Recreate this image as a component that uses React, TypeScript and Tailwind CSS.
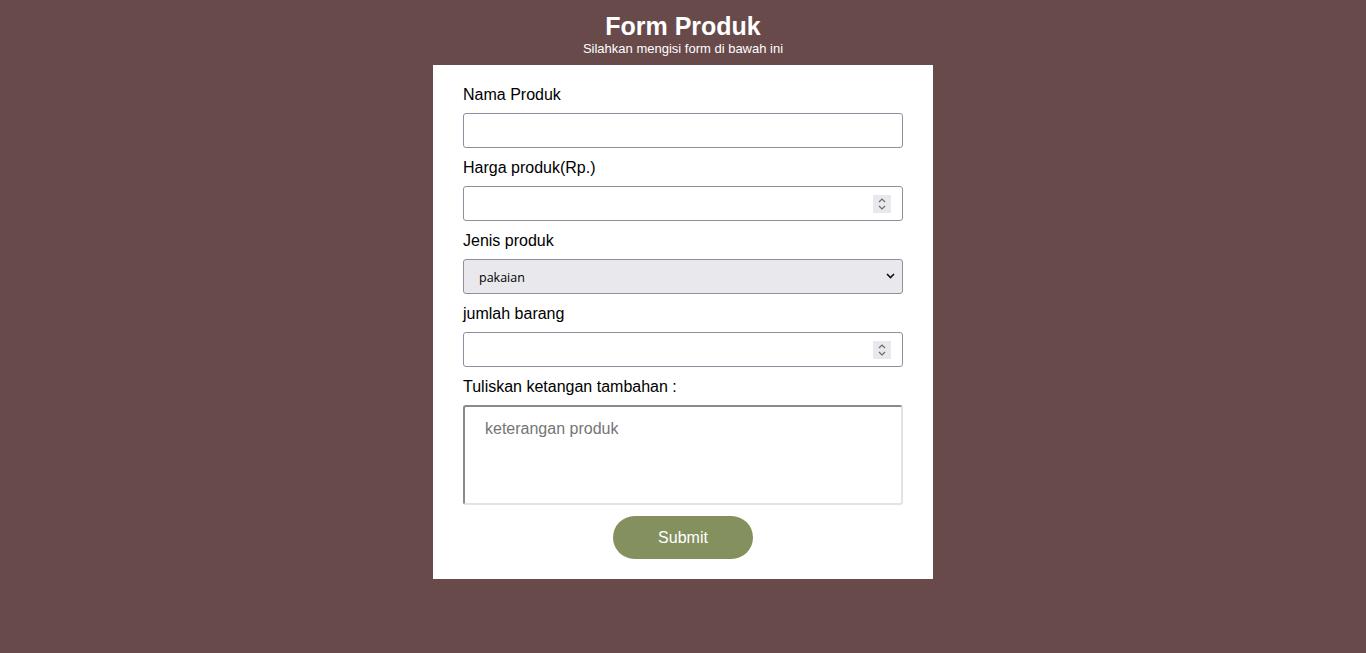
import { useState } from 'react'

const ARIAL = "font-['Liberation_Sans',Arial,sans-serif]"

function Spinner() {
  return (
    <div className="flex h-[18px] w-[18px] flex-col items-center justify-center bg-[#e9e9ed]">
      <svg width="8" height="14" viewBox="0 0 8 14" fill="none" stroke="#6b6b6b" strokeWidth="1.2">
        <path d="M1 5 L4 2 L7 5" />
        <path d="M1 9 L4 12 L7 9" />
      </svg>
    </div>
  )
}

function NumberField({ value, onChange }: { value: string; onChange: (v: string) => void }) {
  return (
    <div className="flex h-[35px] w-full items-center rounded-[3px] border border-[#8f8f9d] bg-white pr-[11px]">
      <input
        type="text"
        inputMode="numeric"
        value={value}
        onChange={(e) => onChange(e.target.value)}
        className={`h-full min-w-0 flex-1 bg-transparent px-3 text-[16px] outline-none ${ARIAL}`}
      />
      <Spinner />
    </div>
  )
}

export default function App() {
  const [nama, setNama] = useState('')
  const [harga, setHarga] = useState('')
  const [jenis, setJenis] = useState('pakaian')
  const [jumlah, setJumlah] = useState('')
  const [ket, setKet] = useState('')

  return (
    <div className={`min-h-[653px] w-full bg-[#684a4b] pt-[12px] ${ARIAL}`}>
      {/* judul */}
      <div className="text-center text-white">
        <h1 className="text-[25px] font-bold leading-[29px]">Form Produk</h1>
        <p className="text-[13px] leading-[15px]">Silahkan mengisi form di bawah ini</p>
      </div>

      {/* form */}
      <form
        onSubmit={(e) => e.preventDefault()}
        className="mx-auto mt-[9px] flex w-[500px] flex-col bg-white px-[30px] pb-[20px] pt-[19px] text-black"
      >
        <label className="pt-[1px] text-[16px] leading-[20px]">Nama Produk</label>
        <input
          type="text"
          value={nama}
          onChange={(e) => setNama(e.target.value)}
          className="mt-[8px] h-[35px] w-full rounded-[3px] border border-[#8f8f9d] px-3 text-[16px] outline-none"
        />

        <label className="mt-[9px] pt-[1px] text-[16px] leading-[20px]">Harga produk(Rp.)</label>
        <div className="mt-[8px]">
          <NumberField value={harga} onChange={setHarga} />
        </div>

        <label className="mt-[9px] pt-[1px] text-[16px] leading-[20px]">Jenis produk</label>
        <div className="relative mt-[8px] h-[35px] w-full">
          <select
            value={jenis}
            onChange={(e) => setJenis(e.target.value)}
            className="h-full w-full appearance-none rounded-[3px] border border-[#8f8f9d] bg-[#e9e9ed] pl-[15px] pt-[4px] font-['Open_Sans','Noto_Sans',sans-serif] text-[12.5px] text-black outline-none"
          >
            <option value="pakaian">pakaian</option>
            <option value="elektronik">elektronik</option>
            <option value="makanan">makanan</option>
          </select>
          <svg
            className="pointer-events-none absolute right-[8px] top-[14px]"
            width="9"
            height="6"
            viewBox="0 0 9 6"
            fill="none"
            stroke="#111"
            strokeWidth="1.6"
          >
            <path d="M1 1 L4.5 4.5 L8 1" />
          </svg>
        </div>

        <label className="mt-[9px] pt-[1px] text-[16px] leading-[20px]">jumlah barang</label>
        <div className="mt-[8px]">
          <NumberField value={jumlah} onChange={setJumlah} />
        </div>

        <label className="mt-[9px] pt-[1px] text-[16px] leading-[20px]">Tuliskan ketangan tambahan :</label>
        <textarea
          value={ket}
          onChange={(e) => setKet(e.target.value)}
          placeholder="keterangan produk"
          className="mt-[8px] h-[100px] w-full resize-none rounded-[3px] border-2 border-b-[#e3e3e3] border-l-[#8a8a8a] border-r-[#e3e3e3] border-t-[#8a8a8a] px-[20px] pt-[13px] text-[16px] leading-[18px] outline-none placeholder:text-[#757575]"
        />

        <button
          type="submit"
          className="mx-auto mt-[11px] h-[43px] w-[140px] rounded-full bg-[#84915f] text-[16px] text-white"
        >
          Submit
        </button>
      </form>
    </div>
  )
}
